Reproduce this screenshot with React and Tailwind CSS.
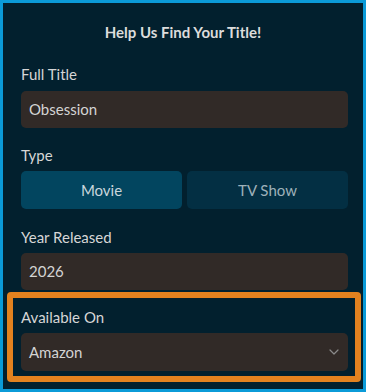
export default function App() {
  const label = "block h-5 leading-5 text-[15px] text-[#d6d6d6]";
  const field = "h-[37px] rounded-[5px] bg-[#312a27] px-2 flex items-center text-[15px] text-[#d4d4d4]";

  return (
    <div className="w-[366px] h-[392px] border-[3px] border-[#0b9bd8] bg-[#02202e] flex flex-col font-['Lato',sans-serif]">
      <h1 className="mt-[19px] h-5 leading-5 text-center text-[15px] font-bold text-[#dcdcdc]">
        Help Us Find Your Title!
      </h1>

      <div className="pl-[18px] pr-[15px] mt-[22px]">
        <label className={label}>Full Title</label>
        <div className={"mt-[7px] " + field}>Obsession</div>

        <label className={"mt-[17px] " + label}>Type</label>
        <div className="mt-[6px] grid grid-cols-2 gap-[5px] h-[38px]">
          <button className="rounded-[5px] bg-[#02455f] text-[15px] text-[#c9d6dc]">Movie</button>
          <button className="rounded-[5px] bg-[#032f43] text-[15px] text-[#9eb1ba]">TV Show</button>
        </div>

        <label className={"mt-[18px] " + label}>Year Released</label>
        <div className={"mt-[6px] " + field}>2026</div>
      </div>

      <div className="mt-[2px] ml-[4px] mr-[2px] border-[6px] border-[#e3821f] rounded-[4px] pt-[9px] pb-[5px] pl-[8px] pr-[7px]">
        <label className={label}>Available On</label>
        <div className={"mt-[6px] h-[38px] justify-between pr-[9px] " + field}>
          <span>Amazon</span>
          <svg width="10" height="6" viewBox="0 0 10 6" fill="none">
            <path d="M1 1l4 4 4-4" stroke="#8a8a8a" strokeWidth="1.2" strokeLinecap="round" strokeLinejoin="round" />
          </svg>
        </div>
      </div>
    </div>
  );
}
